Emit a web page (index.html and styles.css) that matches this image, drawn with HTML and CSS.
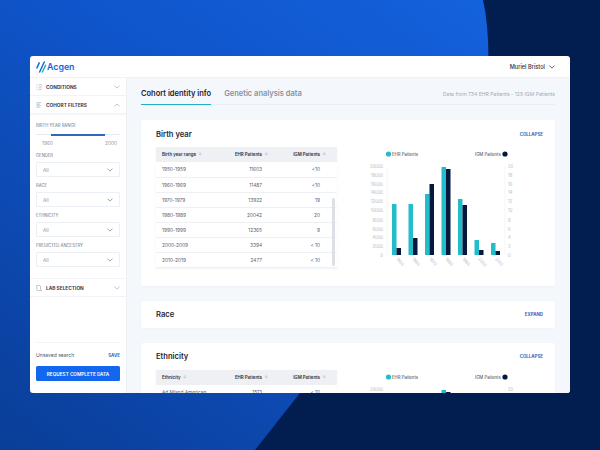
FILE: index.html
```html
<!DOCTYPE html>
<html lang="en">
<head>
<meta charset="utf-8">
<title>Acgen</title>
<link rel="stylesheet" href="styles.css">
</head>
<body>
<svg class="backdrop" viewBox="0 0 600 450" aria-hidden="true"><path d="M483 0Q490 30 488 80Q480 250 300 393L255 450H600V0Z" fill="#021e50"/></svg>
<svg class="defs" aria-hidden="true">
  <symbol id="chev" viewBox="0 0 8 5"><path d="M1 1l3 3 3-3" fill="none" stroke="currentColor" stroke-width="1" stroke-linecap="round" stroke-linejoin="round"/></symbol>
</svg>
<div class="window">
  <header class="topbar">
    <div class="brand">
      <svg class="logo" viewBox="0 0 12 14" aria-hidden="true"><path d="M1 8L3.500 2.500M4 12.500L9 1.500" fill="none" stroke="#1565e0" stroke-width="1.600" stroke-linecap="round"/><path d="M7 12.500L10.500 5" fill="none" stroke="#1fb6c6" stroke-width="1.600" stroke-linecap="round"/></svg>
      <span class="brand-name">Acgen</span>
    </div>
    <div class="user">Muriel Bristol <svg class="chev dark"><use href="#chev"/></svg></div>
  </header>
  <div class="layout">
    <aside class="sidebar">
      <div class="acc">
        <svg class="acc-icon" viewBox="0 0 8 8" aria-hidden="true"><path d="M.5 1h1.500M3.500 1H8M.5 4h1.500M3.500 4H8M.5 7h1.500M3.500 7H8" stroke="#8a929e" stroke-width=".7" fill="none"/></svg>
        <span class="acc-title">CONDITIONS</span>
        <svg class="chev"><use href="#chev"/></svg>
      </div>
      <div class="acc open">
        <svg class="acc-icon" viewBox="0 0 8 8" aria-hidden="true"><path d="M.5 1H7M.5 3H5M.5 5H7M.5 7H5" stroke="#8a929e" stroke-width=".7" fill="none"/></svg>
        <span class="acc-title">COHORT FILTERS</span>
        <svg class="chev up"><use href="#chev"/></svg>
      </div>
      <div class="filters">
        <div class="label">BIRTH YEAR RANGE</div>
        <div class="slider"><div class="slider-fill"></div></div>
        <div class="slider-ends"><span>1960</span><span>2000</span></div>
        <div class="label">GENDER</div>
        <div class="select">All<svg class="chev dim"><use href="#chev"/></svg></div>
        <div class="label">RACE</div>
        <div class="select">All<svg class="chev dim"><use href="#chev"/></svg></div>
        <div class="label">ETHNICITY</div>
        <div class="select">All<svg class="chev dim"><use href="#chev"/></svg></div>
        <div class="label">PREDICTED ANCESTRY</div>
        <div class="select">All<svg class="chev dim"><use href="#chev"/></svg></div>
      </div>
      <div class="acc lab">
        <svg class="acc-icon" viewBox="0 0 8 8" aria-hidden="true"><path d="M1 .5h4l1 1V6l1.500 1.500H2L1 6.500z" stroke="#8a929e" stroke-width=".7" fill="none"/></svg>
        <span class="acc-title">LAB SELECTION</span>
        <svg class="chev"><use href="#chev"/></svg>
      </div>
      <div class="side-foot">
        <div class="save-row"><span>Unsaved search</span><a class="link">SAVE</a></div>
        <button class="cta" type="button">REQUEST COMPLETE DATA</button>
      </div>
    </aside>
    <main class="main">
      <nav class="tabs">
        <span class="tab active">Cohort identity info</span>
        <span class="tab">Genetic analysis data</span>
        <span class="tabs-note">Data from 734 EHR Patients - 125 IGM Patients</span>
      </nav>
      <section class="card">
        <div class="card-head"><h2>Birth year</h2><a class="link">COLLAPSE</a></div>
        <div class="card-body">
          <div class="table-wrap">
            <table class="data">
              <thead><tr><th>Birth year range <i>↓</i></th><th>EHR Patients <i>↓</i></th><th>IGM Patients <i>↓</i></th></tr></thead>
              <tbody>
                <tr><td>1950-1959</td><td>11603</td><td>&lt;10</td></tr>
                <tr><td>1960-1969</td><td>11487</td><td>&lt;10</td></tr>
                <tr><td>1970-1979</td><td>13922</td><td>19</td></tr>
                <tr><td>1980-1989</td><td>20042</td><td>20</td></tr>
                <tr><td>1990-1999</td><td>12365</td><td>9</td></tr>
                <tr><td>2000-2009</td><td>3394</td><td>&lt; 10</td></tr>
                <tr><td>2010-2019</td><td>2477</td><td>&lt; 10</td></tr>
              </tbody>
            </table>
            <div class="scroll-thumb"></div>
          </div>
          <svg class="chart" viewBox="0 0 193 120">
            <circle cx="38.500" cy="7" r="2.600" fill="#22bccb"/>
            <text x="42" y="9" class="lg">EHR Patients</text>
            <text x="125" y="9" class="lg">IGM Patients</text>
            <circle cx="155" cy="7" r="2.600" fill="#07183d"/>
            <g class="tick">
              <text x="33" y="20.500">20000</text><text x="33" y="29.500">18000</text><text x="33" y="38.500">16000</text><text x="33" y="46.500">14000</text><text x="33" y="55.500">12000</text><text x="33" y="64.500">10000</text><text x="33" y="74.500">8000</text><text x="33" y="83.500">6000</text><text x="33" y="91.500">4000</text><text x="33" y="100.500">2000</text><text x="33" y="109.500">0</text>
            </g>
            <g class="tick start">
              <text x="158" y="20.500">20</text><text x="158" y="29.500">18</text><text x="158" y="38.500">16</text><text x="158" y="46.500">14</text><text x="158" y="55.500">12</text><text x="158" y="64.500">10</text><text x="158" y="74.500">8</text><text x="158" y="83.500">6</text><text x="158" y="91.500">4</text><text x="158" y="100.500">2</text><text x="158" y="109.500">0</text>
            </g>
            <path d="M37 19V108M155 19V108" fill="none" stroke="#eef0f3" stroke-width=".6"/>
            <g fill="#22bccb">
              <rect x="42" y="57" width="4.500" height="51"/><rect x="58.500" y="57" width="4.500" height="51"/><rect x="75" y="47" width="4.500" height="61"/><rect x="91.500" y="20" width="4.500" height="88"/><rect x="108" y="52" width="4.500" height="56"/><rect x="124.500" y="93" width="4.500" height="15"/><rect x="141" y="96" width="4.500" height="12"/>
            </g>
            <g fill="#07183d">
              <rect x="46.500" y="101" width="4.500" height="7"/><rect x="63" y="91" width="4.500" height="17"/><rect x="79.500" y="37" width="4.500" height="71"/><rect x="96" y="22" width="4.500" height="86"/><rect x="112.500" y="58" width="4.500" height="50"/><rect x="129" y="103" width="4.500" height="5"/><rect x="145.500" y="104" width="4.500" height="4"/>
            </g>
            <g class="tick rot">
              <text transform="translate(46 112) rotate(50)">1950</text><text transform="translate(62 112) rotate(50)">1960</text><text transform="translate(79 112) rotate(50)">1970</text><text transform="translate(95 112) rotate(50)">1980</text><text transform="translate(112 112) rotate(50)">1990</text><text transform="translate(128 112) rotate(50)">2000</text><text transform="translate(145 112) rotate(50)">2010</text>
            </g>
          </svg>
        </div>
      </section>
      <section class="card slim">
        <div class="card-head"><h2>Race</h2><a class="link">EXPAND</a></div>
      </section>
      <section class="card">
        <div class="card-head"><h2>Ethnicity</h2><a class="link">COLLAPSE</a></div>
        <div class="card-body">
          <div class="table-wrap">
            <table class="data">
              <thead><tr><th>Ethnicity <i>↓</i></th><th>EHR Patients <i>↓</i></th><th>IGM Patients <i>↓</i></th></tr></thead>
              <tbody>
                <tr><td>Ad Mixed American</td><td>1513</td><td>&lt; 10</td></tr>
              </tbody>
            </table>
          </div>
          <svg class="chart" viewBox="0 0 193 120">
            <circle cx="38.500" cy="7" r="2.600" fill="#22bccb"/>
            <text x="42" y="9" class="lg">EHR Patients</text>
            <text x="125" y="9" class="lg">IGM Patients</text>
            <circle cx="155" cy="7" r="2.600" fill="#07183d"/>
            <g class="tick"><text x="33" y="20.500">20000</text></g>
            <g class="tick start"><text x="158" y="20.500">20</text></g>
            <path d="M37 19V108M155 19V108" fill="none" stroke="#eef0f3" stroke-width=".6"/>
            <rect x="91.500" y="20" width="4.500" height="88" fill="#22bccb"/>
            <rect x="96" y="22" width="4.500" height="86" fill="#07183d"/>
          </svg>
        </div>
      </section>
    </main>
  </div>
</div>
</body>
</html>
```
FILE: styles.css
```css
* { box-sizing: border-box; }
html, body { margin: 0; height: 450px; overflow: hidden; }
body {
  position: relative;
  padding: 56px 30px 0;
  font-family: Inter, "Liberation Sans", sans-serif;
  color: #1b2230;
  background: linear-gradient(215deg, #1565e2 0%, #0f54c9 45%, #0a3e98 100%);
}
.backdrop { position: absolute; left: 0; top: 0; width: 600px; height: 450px; }
.defs { position: absolute; width: 0; height: 0; }
.window {
  position: relative;
  width: 540px;
  height: 337px;
  display: flex;
  flex-direction: column;
  background: #fff;
  border-radius: 3px;
  overflow: hidden;
}
.topbar {
  flex: none;
  height: 22px;
  display: flex;
  align-items: center;
  justify-content: space-between;
  padding: 0 15px 0 6px;
  border-bottom: 1px solid #eff1f4;
}
.brand { display: flex; align-items: center; }
.logo { width: 11px; height: 14px; }
.brand-name { font-size: 8.800px; font-weight: 600; color: #1565e0; }
.user { display: flex; align-items: center; gap: 4px; font-size: 5.600px; font-weight: 500; color: #2b3240; }
.chev { width: 6px; height: 4px; color: #a9afb9; flex: none; }
.chev.dark { color: #2b3240; }
.chev.dim { color: #7e8692; }
.chev.up { transform: rotate(180deg); }
.layout { flex: 1; min-height: 0; display: flex; }
.sidebar {
  flex: none;
  width: 97px;
  display: flex;
  flex-direction: column;
  border-right: 1px solid #eef1f5;
}
.acc {
  flex: none;
  height: 18px;
  display: flex;
  align-items: center;
  padding: 0 6px;
  border-bottom: 1px solid #f1f3f6;
}
.acc-icon { width: 6px; height: 6px; flex: none; margin-right: 4px; }
.acc-title { flex: 1; font-size: 4.800px; font-weight: 700; color: #3a414e; }
.acc.open { box-shadow: 0 1px 2px rgba(20, 40, 80, .05); }
.filters { padding: 9px 6px 0; }
.label { font-size: 4.200px; line-height: 6px; color: #6f7784; }
.slider {
  height: 1px;
  margin: 5px 0 0;
  background: #e6e9ee;
}
.slider-fill { width: 54px; height: 1.500px; margin-left: 15px; background: #2f68bf; }
.slider-ends {
  display: flex;
  justify-content: space-between;
  padding: 0 3px 0 6px;
  margin: 5px 0 7px;
  font-size: 4.800px;
  line-height: 6px;
  color: #8f96a1;
}
.select {
  display: flex;
  align-items: center;
  justify-content: space-between;
  height: 15px;
  margin: 3px 0 6px;
  padding: 0 6px;
  border: 1px solid #eceff3;
  border-radius: 1px;
  font-size: 4.800px;
  color: #8f96a1;
}
.lab { margin-top: 5px; border-top: 1px solid #f3f5f8; height: 19px; }
.side-foot { margin-top: auto; padding: 0 6px 12px; }
.save-row {
  display: flex;
  justify-content: space-between;
  align-items: center;
  padding-top: 9px;
  margin-bottom: 8px;
  border-top: 1px solid #f3f5f8;
  font-size: 5px;
  color: #4d5562;
}
.link { font-size: 4.400px; font-weight: 700; color: #2e6ac4; }
.cta {
  display: block;
  width: 84px;
  height: 15px;
  padding: 0;
  border: 0;
  border-radius: 1.500px;
  background: #1367ee;
  color: #fff;
  font: 600 4.700px Inter, "Liberation Sans", sans-serif;
}
.main {
  flex: 1;
  min-width: 0;
  padding: 0 15px 0 14px;
  background: #f4f8fd;
  overflow: hidden;
}
.tabs {
  height: 27px;
  display: flex;
  gap: 13px;
  border-bottom: 1px solid #e9eef4;
}
.tab {
  position: relative;
  display: flex;
  align-items: center;
  padding-top: 5px;
  font-size: 7.500px;
  font-weight: 600;
  color: #8a919c;
}
.tab.active { color: #1b2230; }
.tab.active::after {
  content: "";
  position: absolute;
  left: 0; right: 0; bottom: -1px;
  height: 1.500px;
  background: #22b0c4;
}
.tabs-note { margin-left: auto; align-self: center; padding-top: 5px; font-size: 5.100px; color: #a3a9b2; }
.card {
  margin-top: 15px;
  padding: 8px 12px 18px 15px;
  background: #fff;
  border-radius: 3px;
  box-shadow: 0 1px 3px rgba(30, 60, 120, .03);
}
.card.slim { height: 27px; padding-top: 8px; padding-bottom: 0; }
.card-head { display: flex; align-items: center; justify-content: space-between; height: 12px; margin-bottom: 7px; }
h2 { margin: 0; font-size: 7.600px; font-weight: 600; color: #1f2633; }
.card-body { display: flex; gap: 13px; }
.table-wrap { position: relative; flex: none; width: 181px; box-shadow: 0 1px 2px rgba(30, 50, 90, .06); }
.data { width: 100%; border-collapse: collapse; table-layout: fixed; font-size: 4.800px; }
.data th, .data td { height: 15px; padding: 0; text-align: right; white-space: nowrap; }
.data th:first-child, .data td:first-child { width: 62px; text-align: left; padding-left: 6px; }
.data th:nth-child(2), .data td:nth-child(2) { width: 52px; }
.data th:nth-child(2) { padding-right: 2px; }
.data th:nth-child(3) { padding-right: 11px; }
.data th { background: #eef0f3; font-size: 4.400px; font-weight: 600; color: #2b3240; }
.data th i { font-style: normal; color: #b2b7bf; margin-left: 1px; }
.data td { color: #59606d; border-bottom: 1px solid #eef0f3; }
.data td:nth-child(2) { padding-right: 8px; }
.data td:nth-child(3) { padding-right: 17px; }
.scroll-thumb {
  position: absolute;
  right: 2px;
  top: 51px;
  width: 3px;
  height: 68px;
  background: #dde0e5;
  border-radius: 2px;
}
.chart { flex: none; width: 193px; height: 120px; }
.lg { font-size: 4.300px; fill: #39404d; font-family: Inter, "Liberation Sans", sans-serif; }
.tick text { font-size: 4.200px; fill: #b4b9c1; text-anchor: end; font-family: Inter, "Liberation Sans", sans-serif; }
.tick.start text, .tick.rot text { text-anchor: start; }
```
